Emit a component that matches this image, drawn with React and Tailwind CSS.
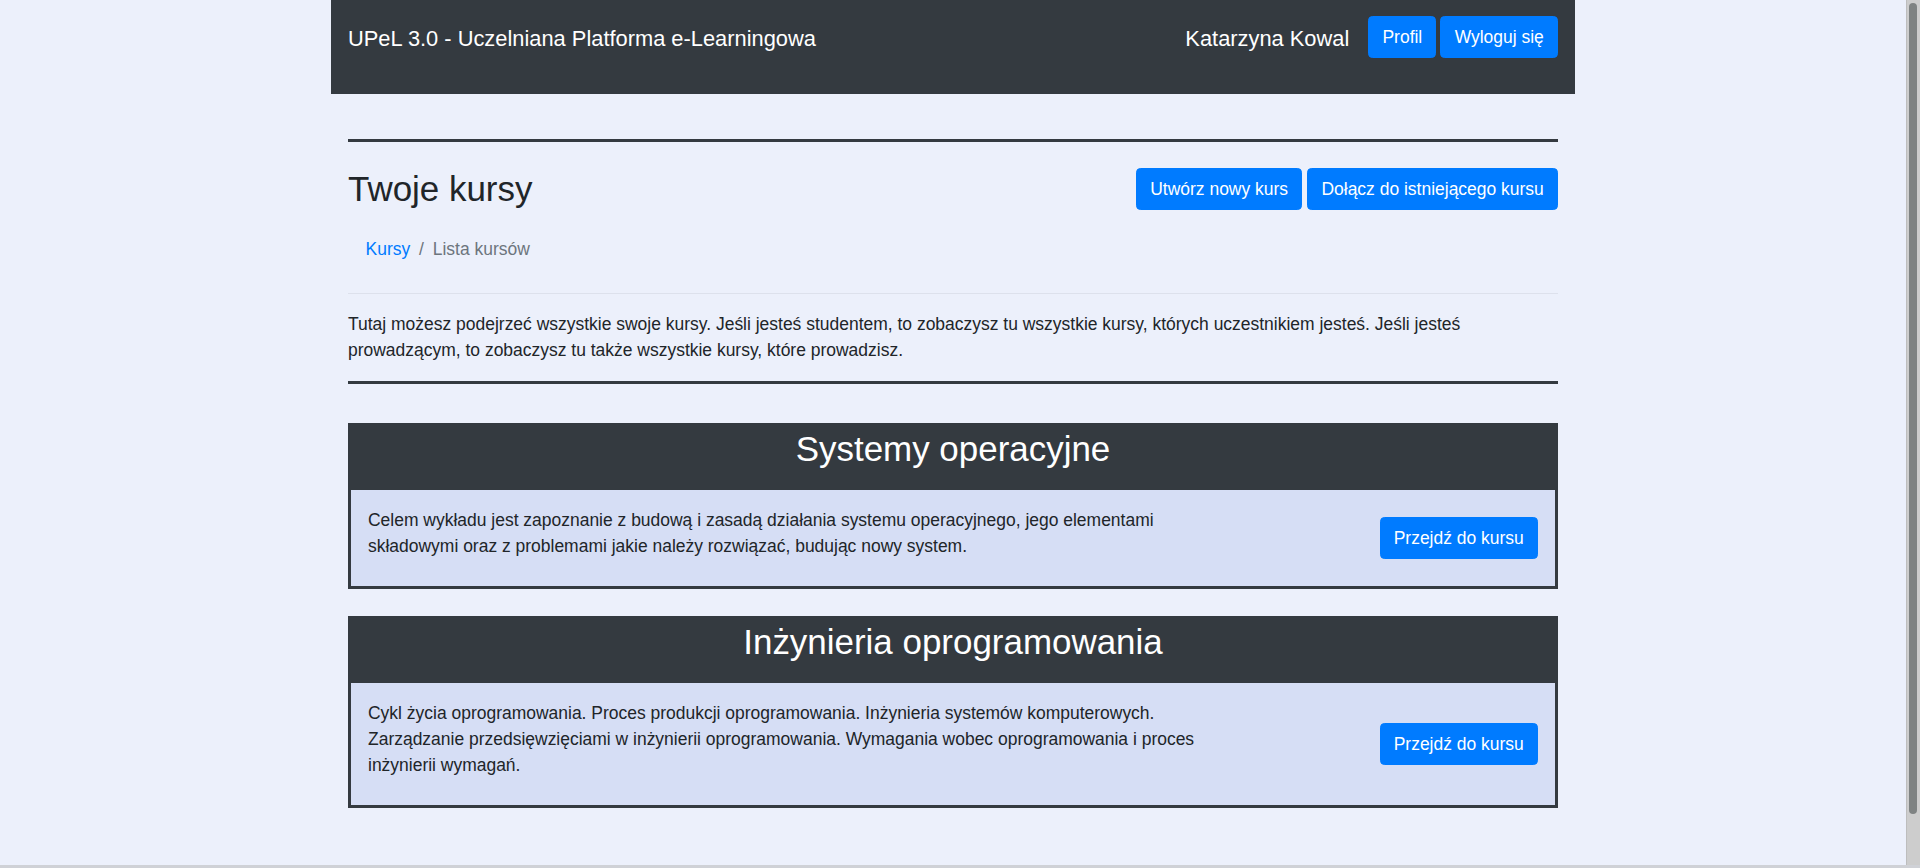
export default function App() {
  const courses = [
    {
      title: "Systemy operacyjne",
      desc: "Celem wykładu jest zapoznanie z budową i zasadą działania systemu operacyjnego, jego elementami składowymi oraz z problemami jakie należy rozwiązać, budując nowy system.",
    },
    {
      title: "Inżynieria oprogramowania",
      desc: "Cykl życia oprogramowania. Proces produkcji oprogramowania. Inżynieria systemów komputerowych. Zarządzanie przedsięwzięciami w inżynierii oprogramowania. Wymagania wobec oprogramowania i proces inżynierii wymagań.",
    },
  ];
  const btn =
    "bg-[#007bff] text-white rounded-[4.4px] text-[17.48px] leading-[26.4px] px-[13.2px] py-[6.6px] border border-[#007bff]";
  return (
    <div className="h-[868px] overflow-hidden flex flex-col bg-[#ecf0fb] font-['Liberation_Sans',Arial,sans-serif] text-[#212529]">
      <div className="flex flex-1 min-h-0">
        <div className="flex-1 min-w-0 overflow-hidden">
          <div className="mx-auto w-[1244px]">
            <header className="h-[94px] bg-[#343a40] flex justify-between items-start px-[17px] pt-[16px]">
              <span className="text-[21.85px] leading-[41px] pt-[2px] text-white">
                UPeL 3.0 - Uczelniana Platforma e-Learningowa
              </span>
              <div className="flex items-start">
                <span className="text-[21.85px] leading-[41px] pt-[2px] text-white mr-[19px]">
                  Katarzyna Kowal
                </span>
                <div className="flex gap-[4px]">
                  <button className={btn}>Profil</button>
                  <button className={btn}>Wyloguj się</button>
                </div>
              </div>
            </header>
            <main className="px-[17px] pb-[110px]">
              <div className="mt-[45px] h-[3px] bg-[#343a40]" />
              <div className="mt-[26px] flex justify-between items-start">
                <h2 className="text-[34.95px] leading-[42.24px] font-normal">Twoje kursy</h2>
                <div className="flex gap-[5px]">
                  <button className={btn}>Utwórz nowy kurs</button>
                  <button className={btn}>Dołącz do istniejącego kursu</button>
                </div>
              </div>
              <nav className="mt-[13px] py-[13.2px] px-[17.6px] text-[17.48px] leading-[26.4px] flex">
                <a className="text-[#007bff]">Kursy</a>
                <span className="px-[8.8px] text-[#6c757d]">/</span>
                <span className="text-[#6c757d]">Lista kursów</span>
              </nav>
              <div className="mt-[17px] h-px bg-[#dde1ec]" />
              <p className="mt-[17px] text-[17.48px] leading-[26.4px]">
                Tutaj możesz podejrzeć wszystkie swoje kursy. Jeśli jesteś studentem, to zobaczysz tu wszystkie kursy, których uczestnikiem jesteś. Jeśli jesteś prowadzącym, to zobaczysz tu także wszystkie kursy, które prowadzisz.
              </p>
              <div className="mt-[17px] h-[3px] bg-[#343a40]" />
              <div className="mt-[39px] flex flex-col gap-[27px]">
                {courses.map((c) => (
                  <div key={c.title} className="border-[3px] border-[#343a40]">
                    <div className="h-[64px] bg-[#343a40] pt-[2.5px] text-center text-white text-[34.95px] leading-[42.24px]">
                      {c.title}
                    </div>
                    <div className="bg-[#d6def5] flex justify-between items-center px-[17px]">
                      <p className="w-[850px] pt-[17px] pb-[26px] text-[17.48px] leading-[26.4px]">
                        {c.desc}
                      </p>
                      <button className={btn}>Przejdź do kursu</button>
                    </div>
                  </div>
                ))}
              </div>
            </main>
          </div>
        </div>
        <div className="w-[14px] shrink-0 bg-[#cdcdcd] border-l border-[#bdbdbd] pt-[3px] pl-[2px] pr-[3px]">
          <div className="h-[811px] rounded-full bg-[#7f8383]" />
        </div>
      </div>
      <div className="h-[3px] shrink-0 bg-[#cfd1d6]" />
    </div>
  );
}
